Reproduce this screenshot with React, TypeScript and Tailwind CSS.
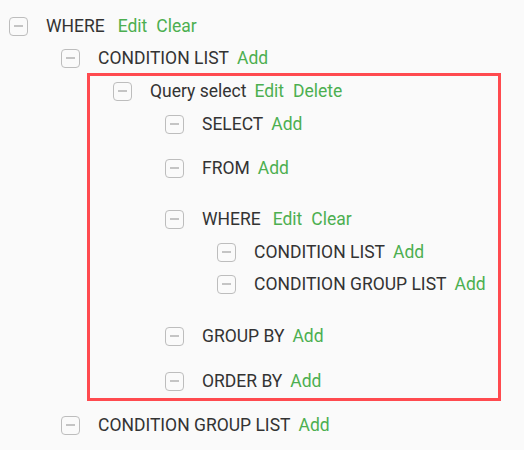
import React from "react";

function Icon() {
  return (
    <span className="flex h-[19px] w-[19px] shrink-0 items-center justify-center rounded-[4px] border border-[#bdbdbd] bg-[#fafafa]">
      <span className="block h-[2px] w-[9px] bg-[#c4c4c4]" />
    </span>
  );
}

function Row({ label, links, className = "", labelGap = "" }: { label: string; links: string[]; className?: string; labelGap?: string }) {
  return (
    <div className={"flex h-[24px] items-center " + className}>
      <Icon />
      <span className={"ml-[18px] text-[#333333] " + labelGap}>{label}</span>
      {links.map((l, i) => (
        <span key={i} className={"text-[#4caf50] " + (i === 0 ? "ml-[8px]" : "ml-[9px]")}>
          {l}
        </span>
      ))}
    </div>
  );
}

export default function App() {
  return (
    <div
      className="h-[450px] w-[524px] bg-[#fafafa] pl-[9px] pt-[14px] text-[17.5px] leading-[24px]"
      style={{ fontFamily: "Roboto, 'Noto Sans', sans-serif" }}
    >
      <Row label="WHERE" links={["Edit", "Clear"]} labelGap="mr-[5px]" />
      <div className="pl-[52px]">
        <Row label="CONDITION LIST" links={["Add"]} className="mt-[8px]" />
        <div className="ml-[26px] mt-[3px] w-[414px] border-[3px] border-[#ff4a4f] pb-[5px] pl-[23px] pt-[3px]">
          <Row label="Query select" links={["Edit", "Delete"]} />
          <div className="pl-[52px]">
            <Row label="SELECT" links={["Add"]} className="mt-[9px]" />
            <Row label="FROM" links={["Add"]} className="mt-[20px]" />
            <Row label="WHERE" links={["Edit", "Clear"]} labelGap="mr-[4px]" className="mt-[27px]" />
            <div className="pl-[52px]">
              <Row label="CONDITION LIST" links={["Add"]} className="mt-[9px]" />
              <Row label="CONDITION GROUP LIST" links={["Add"]} className="mt-[8px]" />
            </div>
            <Row label="GROUP BY" links={["Add"]} className="mt-[28px]" />
            <Row label="ORDER BY" links={["Add"]} className="mt-[21px]" />
          </div>
        </div>
        <Row label="CONDITION GROUP LIST" links={["Add"]} className="mt-[12px]" />
      </div>
    </div>
  );
}
